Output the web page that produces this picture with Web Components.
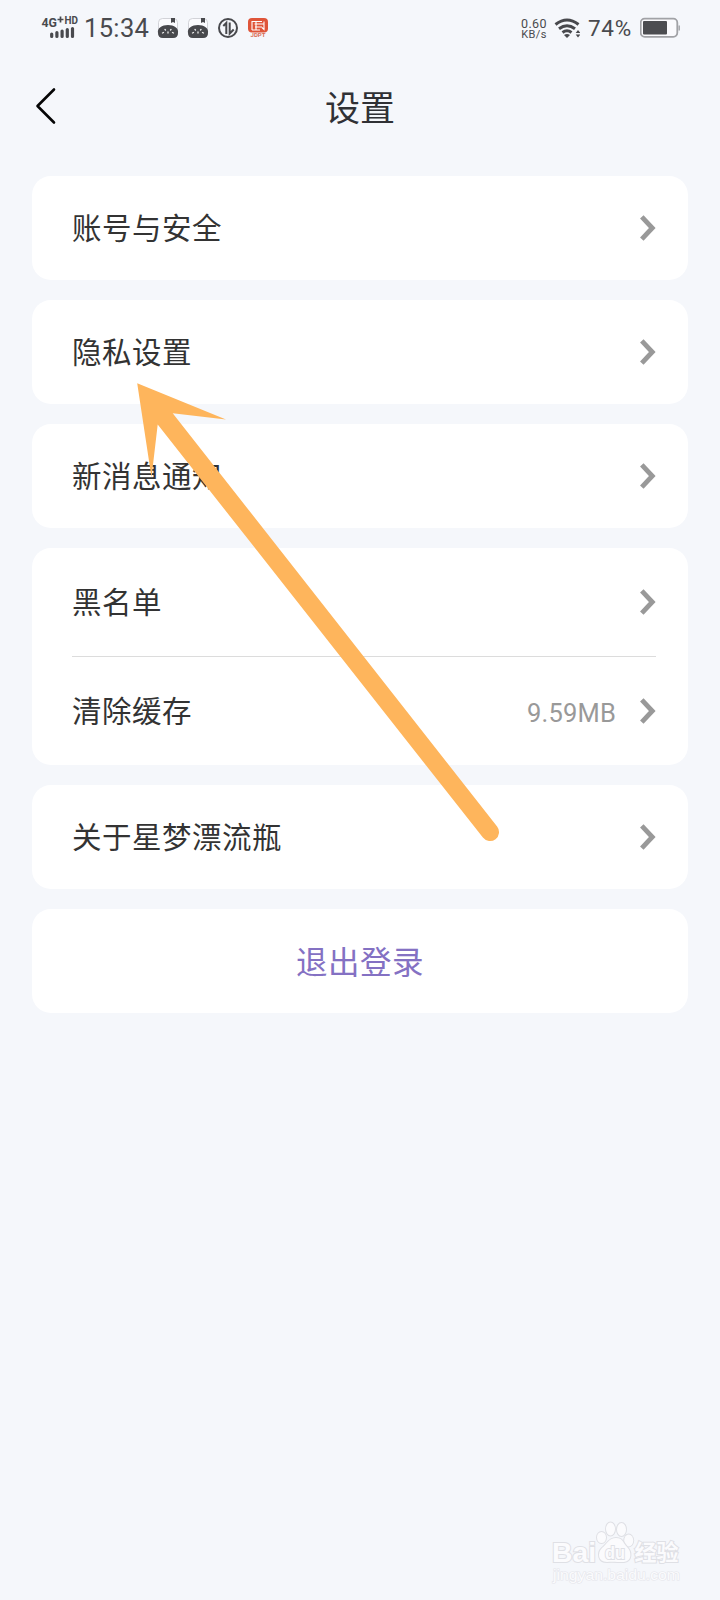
<!DOCTYPE html>
<html lang="zh-CN">
<head>
<meta charset="utf-8">
<title>设置</title>
<style>
html,body{margin:0;background:#f5f7fb}
body{font-family:Roboto,"Noto Sans CJK SC",sans-serif;color:#333}
</style>
</head>
<body>
<settings-page></settings-page>
<script>
const define=(name,html)=>{
  const t=document.createElement('template');
  t.innerHTML=html;
  customElements.define(name,class extends HTMLElement{
    constructor(){super();this.attachShadow({mode:'open'}).append(t.content.cloneNode(true));}
  });
};

define('status-bar',`<style>
:host{display:flex;height:56px;box-sizing:border-box;padding:0 40px 0 41px;align-items:center;color:#494a4e}
svg{display:block;flex:none}
.time{font-size:25.5px;line-height:30px;margin-left:5px;letter-spacing:.35px;width:67px}
.speed{margin-left:auto;width:34px;text-align:center;font-size:12.5px;line-height:11px;letter-spacing:.4px;padding-top:1px}
.speed div+div{font-size:11px}
.pct{font-size:22.5px;line-height:28px;width:52px;margin-left:8px;letter-spacing:.7px}
</style>
<svg width="38" height="56" viewBox="41 0 38 56" fill="#494a4e" font-family="Roboto,sans-serif" font-weight="700">
<text x="41.5" y="26.800" font-size="13.500" textLength="15.5" lengthAdjust="spacingAndGlyphs">4G</text>
<path d="M57.500 19.5h6M60.500 16.5v6" stroke="#494a4e" stroke-width="1.7"/>
<text x="64.5" y="24.300" font-size="10.500" textLength="13.5" lengthAdjust="spacingAndGlyphs">HD</text>
<path d="M51.7 34v2.500M56.900 32.500v4M62.100 31v5.500M67.300 29.500v7M72.500 28.500v8" stroke="#494a4e" stroke-width="3.200" stroke-linecap="round"/>
</svg>
<span class="time">15:34</span>
<svg width="120" height="56" viewBox="151 0 120 56">
<g id="p"><rect x="158.500" y="18.500" width="19" height="19" rx="4" fill="#fbfbfe" stroke="#c8c9ce" stroke-width=".8"/>
<path d="M158 33C157 28 162 25 168 25S179 28 178 33Q178 38 173 38H163Q158 38 158 33Z" fill="#48494d"/>
<path d="M171 18h4v5l-2-1-2 1z" fill="#48494d"/>
<path d="M162.500 33l1-.5M173.500 33l-1-.5M165 29.500l.5.5M171 29.500l-.5.5M168 32v1" stroke="#eee" stroke-width="1.300" stroke-linecap="round"/></g>
<use href="#p" x="30"/>
<circle cx="228" cy="28" r="9" fill="none" stroke="#48494d" stroke-width="2"/>
<path d="M223.300 26l3-3v11M229.700 22.500v11l4-4" fill="none" stroke="#48494d" stroke-width="2"/>
<rect x="248" y="18" width="20" height="14.500" rx="4" fill="#df5539"/>
<path d="M252 30v-8.500h10M254.500 24h9M255 27h7M252 30h8M256 22v8M264 21.500v8l-2-2" fill="none" stroke="#fff" stroke-width="1.100"/>
<text x="250.500" y="37" font-family="Roboto,sans-serif" font-size="5" font-weight="700" textLength="15" lengthAdjust="spacingAndGlyphs" fill="#d96b53">JDPT</text>
</svg>
<div class="speed"><div>0.60</div><div>KB/s</div></div>
<svg width="29" height="56" viewBox="551 0 29 56" fill="none" stroke="#48494d" stroke-width="3">
<path d="M555.500 24.500q11.500-9 23 0"/><path d="M559 28.700q8-6 16 0"/><path d="M562.500 32.500q4.500-3.500 9 0"/>
<path d="M564 35q3-2 6 0l-3 3z" fill="#48494d" stroke="none"/>
<path d="M575.700 33l2.300-3 2.300 3zM575.700 34.500l2.300 3 2.300-3z" fill="#48494d" stroke="none"/>
</svg>
<span class="pct">74%</span>
<svg width="40" height="56" viewBox="640 0 40 56">
<rect x="640.700" y="18.700" width="36.600" height="18.100" rx="4" fill="#fafafd" stroke="#a1a2a6" stroke-width="1.800"/>
<rect x="643" y="21" width="24" height="13.500" rx="1" fill="#4c4d51"/>
<path d="M679.200 25.500v5" stroke="#a1a2a6" stroke-width="1.400"/>
</svg>`);

define('title-bar',`<style>
:host{display:grid;grid-template-columns:64px 1fr 64px;align-items:center;height:104px}
h1{margin:0;padding-top:4px;text-align:center;font-size:35px;line-height:52px;font-weight:400;color:#303135}
svg{display:block}
</style>
<svg width="64" height="44" viewBox="0 86 64 44"><path d="M54 89.500L37.500 106 54 122.500" fill="none" stroke="#050505" stroke-width="2.600" stroke-linecap="round" stroke-linejoin="round"/></svg>
<h1><slot></slot></h1>`);

define('settings-card',`<style>
:host{display:block;background:#fff;border-radius:19px;padding:0 32px 0 40px}
::slotted(.divided){border-top:1px solid #dcdcdc}
</style><slot></slot>`);

define('settings-row',`<style>
:host{display:flex;align-items:center;height:var(--row-height,104px);font-size:29.500px;letter-spacing:.5px;line-height:44px;color:#333}
.label{padding-top:2px}
.value{margin-left:auto;font-size:25.500px;color:#999;letter-spacing:.2px;padding-top:3px}
svg{display:block;margin-left:24px}
</style>
<span class="label"><slot></slot></span><span class="value"><slot name="value"></slot></span>
<svg width="16" height="26" viewBox="640 215 16 26"><path d="M641.800 216.800L652.300 228 641.800 239.200" fill="none" stroke="#999" stroke-width="4.800"/></svg>`);

define('logout-button',`<style>
:host{display:flex;align-items:center;justify-content:center;box-sizing:border-box;height:104px;padding-top:5px;border-radius:19px;background:#fff;color:#8471c3;font-size:31.500px;letter-spacing:.5px;line-height:46px}
</style><slot></slot>`);

define('pointer-arrow',`<style>
:host{position:absolute;left:130px;top:376px;pointer-events:none}
svg{display:block}
</style>
<svg width="375" height="470" viewBox="130 376 375 470"><path d="M137.200 383.300L226 419.500 172.700 413.200 497.100 826.500A9 9 0 0 1 482.900 837.600L157.700 424.500 151.500 477.500Z" fill="#feb55c"/></svg>`);

define('site-watermark',`<style>
:host{position:absolute;left:545px;top:1515px}
svg{display:block}
</style>
<svg width="145" height="75" viewBox="545 1515 145 75" stroke="#dfe0e5" stroke-width="2" paint-order="stroke" fill="#fbfbfd" font-family="'Liberation Sans',sans-serif">
<text x="552" y="1561.500" font-size="28" font-weight="700" textLength="44" lengthAdjust="spacingAndGlyphs">Bai</text>
<ellipse cx="601.500" cy="1537.500" rx="4.500" ry="5.500"/><ellipse cx="610.500" cy="1529" rx="4.500" ry="6.500"/><ellipse cx="621.500" cy="1529.500" rx="4.500" ry="6.500"/><ellipse cx="628.700" cy="1540.500" rx="4.500" ry="6"/>
<path d="M616 1538c7 0 7 5 11 9 5 5 5 14-3 15-4 .5-11-1-17 0-9 0-10-9-5-14 5-4 7-10 14-10z"/>
<text x="605" y="1559" font-size="18" font-weight="700" textLength="20" lengthAdjust="spacingAndGlyphs">du</text>
<text x="634.500" y="1560" font-size="22" font-weight="700" font-family="'Noto Sans CJK SC',sans-serif" textLength="44">经验</text>
<text x="553" y="1579.500" font-size="15" textLength="127" lengthAdjust="spacingAndGlyphs" stroke-width="1.200" stroke="#e5e6eb">jingyan.baidu.com</text>
</svg>`);

define('settings-page',`<style>
:host{display:block;position:relative;width:720px;height:1600px;background:#f5f7fb;overflow:hidden}
main{display:flex;flex-direction:column;gap:20px;padding:16px 32px 0}
.group{--row-height:108px}
</style>
<status-bar></status-bar>
<title-bar>设置</title-bar>
<main>
<settings-card><settings-row>账号与安全</settings-row></settings-card>
<settings-card><settings-row>隐私设置</settings-row></settings-card>
<settings-card><settings-row>新消息通知</settings-row></settings-card>
<settings-card class="group"><settings-row>黑名单</settings-row><settings-row class="divided">清除缓存<span slot="value">9.59MB</span></settings-row></settings-card>
<settings-card><settings-row>关于星梦漂流瓶</settings-row></settings-card>
<logout-button>退出登录</logout-button>
</main>
<pointer-arrow></pointer-arrow>
<site-watermark></site-watermark>`);
</script>
</body>
</html>
